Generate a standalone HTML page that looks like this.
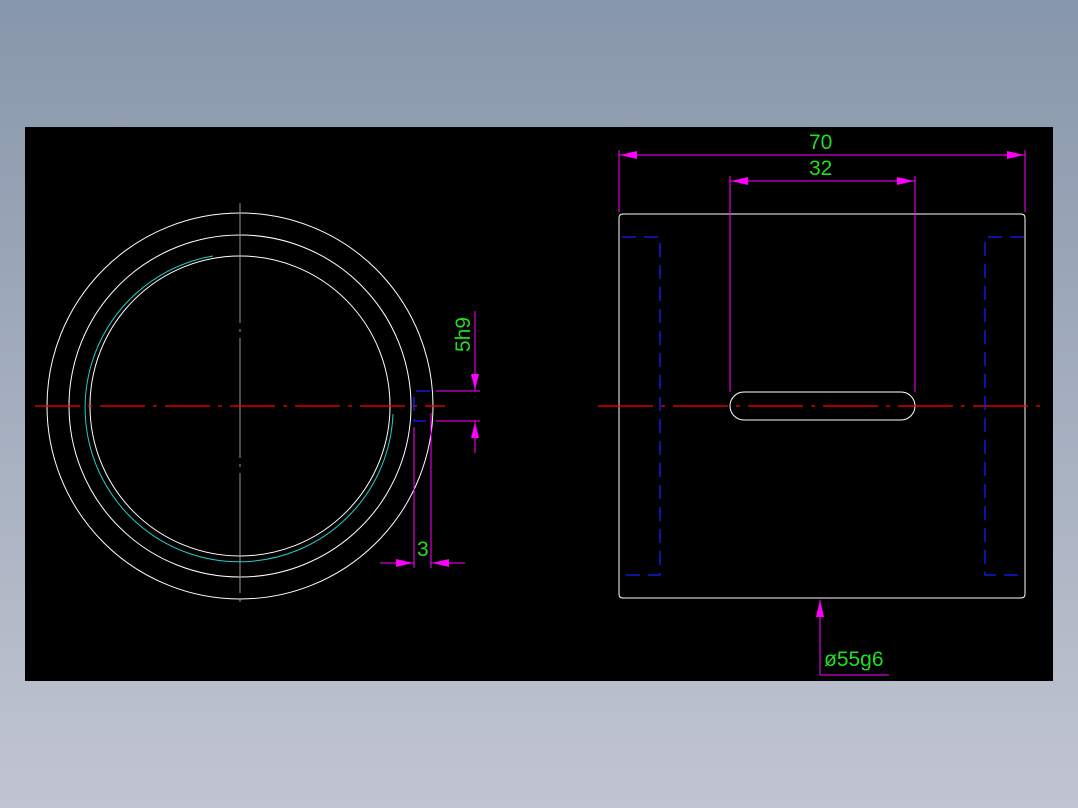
<!DOCTYPE html>
<html><head><style>
html,body{margin:0;padding:0;}
body{width:1078px;height:808px;background:linear-gradient(#8797ab,#c1c5d1);position:relative;overflow:hidden;}
svg{position:absolute;left:0;top:0;}
text{font-family:"Liberation Sans",sans-serif;fill:#22dd22;font-size:21px;}
</style></head><body>
<svg width="1078" height="808" viewBox="0 0 1078 808">
<rect x="25" y="127" width="1028" height="554" fill="#000"/>
<g fill="none" stroke="#fff" stroke-width="1">
<circle cx="240" cy="406" r="193"/>
<circle cx="240" cy="406" r="171"/>
<circle cx="240" cy="406" r="150"/>
<path d="M619 218 Q619 214 623 214 L1021 214 Q1025 214 1025 218 L1025 594 Q1025 598 1021 598 L623 598 Q619 598 619 594 Z"/>
<path d="M744 392 L901 392 A14 14 0 0 1 901 420 L744 420 A14 14 0 0 1 744 392 Z"/>
</g>
<path d="M213 256 A154 154 0 1 0 393 414" fill="none" stroke="#22cccc" stroke-width="1"/>
<line x1="240" y1="203" x2="240" y2="608" stroke="#999" stroke-dasharray="120,6,3,6"/>
<g stroke="#ff0000" stroke-width="1.3">
<line x1="35" y1="406" x2="445" y2="406" stroke-dasharray="45,8,4,8"/>
<line x1="598" y1="406" x2="1042" y2="406" stroke-dasharray="55,8,4,8"/>
</g>
<g fill="none" stroke="#1020ff" stroke-width="1.3" stroke-dasharray="14,8">
<path d="M622 237 L660 237 L660 575 L622 575"/>
<path d="M1024 237 L985 237 L985 575 L1024 575"/>
<path d="M430 391 L414 391 L414 421 L430 421"/>
</g>
<g stroke="#f0f" stroke-width="1" fill="none">
<line x1="619" y1="150" x2="619" y2="212"/><line x1="1025" y1="150" x2="1025" y2="212"/>
<line x1="619" y1="155" x2="1025" y2="155"/>
<line x1="730" y1="176" x2="730" y2="392"/><line x1="915" y1="176" x2="915" y2="392"/>
<line x1="730" y1="181" x2="915" y2="181"/>
<line x1="436" y1="391" x2="480" y2="391"/><line x1="436" y1="421" x2="480" y2="421"/>
<line x1="475" y1="311" x2="475" y2="391"/><line x1="475" y1="421" x2="475" y2="453"/>
<line x1="414" y1="427" x2="414" y2="568"/><line x1="431" y1="413" x2="431" y2="568"/>
<line x1="380" y1="563" x2="414" y2="563"/><line x1="431" y1="563" x2="465" y2="563"/>
<path d="M889 675 L820 675 L820 600"/>
</g>
<g fill="#f0f">
<path d="M620 155 L637 151 L637 159 Z"/><path d="M1024 155 L1007 151 L1007 159 Z"/>
<path d="M731 181 L748 177 L748 185 Z"/><path d="M914 181 L897 177 L897 185 Z"/>
<path d="M475 390 L471 374 L479 374 Z"/><path d="M475 422 L471 438 L479 438 Z"/>
<path d="M413 563 L396 559 L396 567 Z"/><path d="M432 563 L449 559 L449 567 Z"/>
<path d="M820 600 L816 617 L824 617 Z"/>
</g>
<text x="809" y="149">70</text>
<text x="809" y="175">32</text>
<text x="417" y="556">3</text>
<text x="824" y="666">ø55g6</text>
<text transform="translate(470,352) rotate(-90)">5h9</text>
</svg>
</body></html>
